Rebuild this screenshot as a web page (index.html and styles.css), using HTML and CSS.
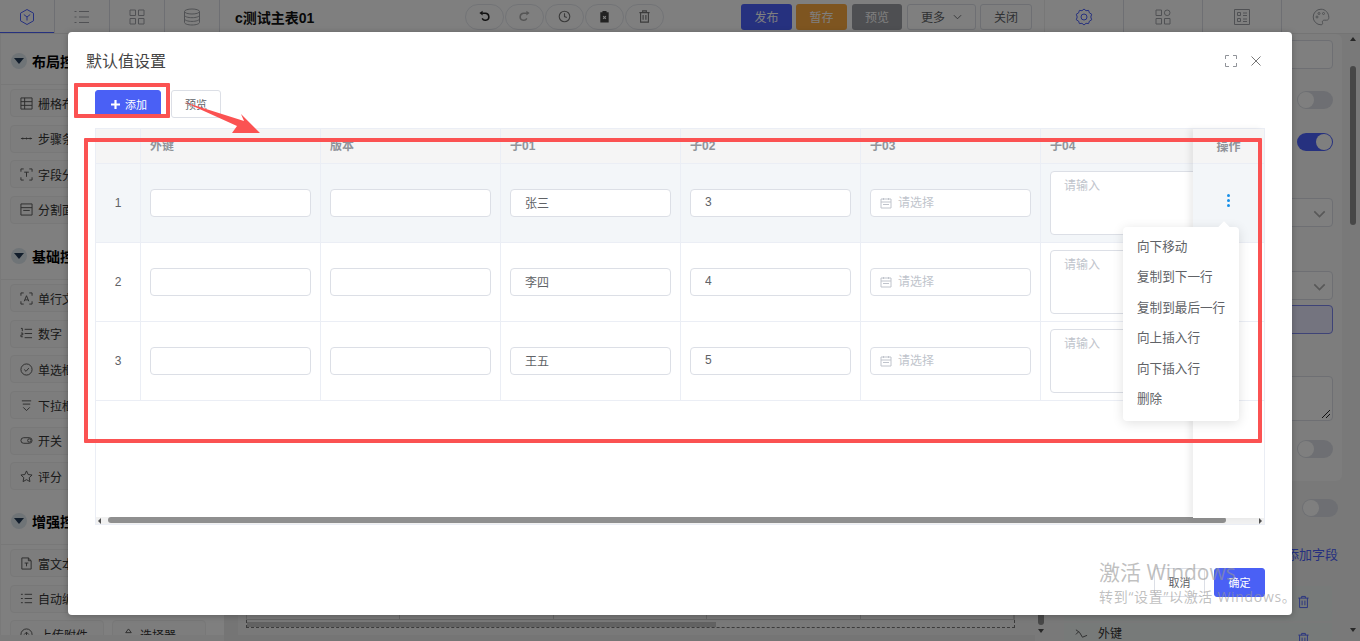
FILE: index.html
```html
<!DOCTYPE html>
<html lang="zh-CN">
<head>
<meta charset="utf-8">
<title>默认值设置</title>
<link rel="stylesheet" href="styles.css">
</head>
<body>
<div class="app">
  <header class="topbar">
    <div class="tabs tabs-left">
      <div class="tab tab-active"><svg class="ico-tab" viewBox="0 0 18 18"><path d="M9 1.500l6.500 3.700v7.600L9 16.500l-6.500-3.700V5.200z"/><path d="M5.800 6.500L9 9l3.200-2.500M9 9v3.500"/></svg></div>
      <div class="tab"><svg class="ico-tab" viewBox="0 0 18 18"><path d="M6 3.500h10M6 9h10M6 14.500h10M1.500 3.500h2M1.500 9h2M1.500 14.500h2"/></svg></div>
      <div class="tab"><svg class="ico-tab" viewBox="0 0 18 18"><path d="M2 2h5.500v5.500H2zM10.500 2H16v5.500h-5.500zM2 10.500h5.500V16H2zM10.500 10.500H16V16h-5.500z"/></svg></div>
      <div class="tab"><svg class="ico-tab" viewBox="0 0 18 18"><ellipse cx="9" cy="3.500" rx="7.500" ry="2.500"/><path d="M1.500 3.500v11c0 1.400 3.400 2.500 7.500 2.500s7.500-1.100 7.500-2.500v-11M1.500 7.200c0 1.400 3.400 2.500 7.500 2.500s7.500-1.100 7.500-2.500M1.500 10.900c0 1.400 3.400 2.500 7.500 2.500s7.500-1.100 7.500-2.500"/></svg></div>
    </div>
    <div class="form-title">c测试主表01</div>
    <div class="history">
      <button class="pill"><svg class="ico-pill ico-dark" viewBox="0 0 14 14"><path d="M4.500 3.500H8a3.800 3.800 0 1 1-3.500 5.500"/><path class="fill" d="M5 .8v5L1.500 3.300z"/></svg></button>
      <button class="pill"><svg class="ico-pill ico-dim" viewBox="0 0 14 14"><path d="M9.500 3.500H6a3.800 3.800 0 1 0 3.500 5.500"/><path class="fill" d="M9 .8v5l3.500-2.500z"/></svg></button>
      <button class="pill"><svg class="ico-pill" viewBox="0 0 14 14"><circle cx="7" cy="7" r="5.700"/><path d="M7 3.500V7l2.500 1"/></svg></button>
      <button class="pill"><svg class="ico-pill" viewBox="0 0 14 14"><path class="fill" d="M2.500 2.500h2.300V1h4.400v1.500h2.300v11h-9z"/><path class="cut" d="M5.500 6.500l3 3M8.500 6.500l-3 3"/></svg></button>
      <button class="pill"><svg class="ico-pill" viewBox="0 0 14 14"><path d="M1.500 2.800h11M5 2.800V1h4v1.800M2.800 2.800v10.200h8.400V2.800M5.500 5.500v5M8.500 5.500v5"/></svg></button>
    </div>
    <div class="actions">
      <button class="btn btn-blue">发布</button>
      <button class="btn btn-orange">暂存</button>
      <button class="btn btn-gray">预览</button>
      <button class="btn btn-more">更多<svg class="chev" viewBox="0 0 10 6"><path d="M1 1l4 4 4-4"/></svg></button>
      <button class="btn btn-close">关闭</button>
    </div>
    <div class="tabs tabs-right">
      <div class="tab-r tab-r-active"><svg class="ico-tab" viewBox="0 0 18 18"><path d="M9 1l2 1.700 2.600-.3.800 2.500 2.300 1.300L15.800 9l.9 2.800-2.300 1.300-.8 2.500-2.600-.3L9 17l-2-1.700-2.600.3-.8-2.500-2.300-1.300L2.200 9l-.9-2.800 2.300-1.300.8-2.500 2.600.3z"/><circle cx="9" cy="9" r="3"/></svg></div>
      <div class="tab-r"><svg class="ico-tab" viewBox="0 0 18 18"><path d="M2 2h5.500v5.500H2zM2 10.500h5.500V16H2zM10.500 10.500H16V16h-5.500z"/><circle cx="13.200" cy="4.800" r="2.800"/></svg></div>
      <div class="tab-r"><svg class="ico-tab" viewBox="0 0 18 18"><path d="M1.500 1.500h15v15h-15zM4.500 4.500h3v3h-3zM4.500 10.500h3v3h-3zM10 5h4M10 7.500h4M10 11h4M10 13.500h4"/></svg></div>
      <div class="tab-r"><svg class="ico-tab" viewBox="0 0 18 18"><path d="M9 1.200a7.800 7.800 0 1 0 0 15.600c1.500 0 1.900-1 1.500-2.100-.5-1.300.2-2.500 1.700-2.500h2.300c1.600 0 2.300-1.100 2.300-2.700C16.800 4.700 13.300 1.200 9 1.200z"/><circle cx="5" cy="9" r="1"/><circle cx="7" cy="5.500" r="1"/><circle cx="11.500" cy="5.500" r="1"/></svg></div>
    </div>
  </header>

  <div class="main">
    <aside class="sidebar">
      <section class="group">
        <h3 class="group-title"><span class="caret"></span>布局控件</h3>
        <div class="group-items">
          <div class="item"><svg class="ico-item" viewBox="0 0 14 14"><path d="M1 1h12v12H1zM1 5h12M1 9h12M5 1v12"/></svg>栅格布局</div>
          <div class="item"><svg class="ico-item" viewBox="0 0 14 14"><path d="M1 7h12M3 6v2M7 6v2M11 6v2"/></svg>步骤条</div>
          <div class="item"><svg class="ico-item" viewBox="0 0 14 14"><path d="M1 4V1h3M10 1h3v3M13 10v3h-3M4 13H1v-3M4.500 4.500h5M7 4.500v5"/></svg>字段分组</div>
          <div class="item"><svg class="ico-item" viewBox="0 0 14 14"><path d="M1 1h12v12H1zM1 5h12M3.500 8h7"/></svg>分割面板</div>
        </div>
      </section>
      <section class="group group-basic">
        <h3 class="group-title"><span class="caret"></span>基础控件</h3>
        <div class="group-items">
          <div class="item"><svg class="ico-item" viewBox="0 0 14 14"><path d="M1 4V1h3M10 1h3v3M13 10v3h-3M4 13H1v-3M4.500 10L7 4l2.500 6M5.500 8.500h3"/></svg>单行文本</div>
          <div class="item"><svg class="ico-item" viewBox="0 0 14 14"><path d="M5 2.500h8M5 7h8M5 11.500h8M1 1.500h1.500v3M1 6.500h2v2H1v2h2"/></svg>数字</div>
          <div class="item"><svg class="ico-item" viewBox="0 0 14 14"><circle cx="7" cy="7" r="6"/><path d="M4.500 7l2 2 3-3.500"/></svg>单选框</div>
          <div class="item"><svg class="ico-item" viewBox="0 0 14 14"><path d="M2 2h10M3 5.500h8M3.500 9L7 12.500 10.500 9"/></svg>下拉框</div>
          <div class="item"><svg class="ico-item" viewBox="0 0 14 14"><rect x="1" y="4" width="12" height="6" rx="3"/><circle cx="10" cy="7" r="1.800"/></svg>开关</div>
          <div class="item"><svg class="ico-item" viewBox="0 0 14 14"><path d="M7 1l1.800 3.900 4.200.5-3.100 2.900.8 4.200L7 10.400l-3.700 2.100.8-4.200L1 5.400l4.200-.5z"/></svg>评分</div>
        </div>
      </section>
      <section class="group group-adv">
        <h3 class="group-title"><span class="caret"></span>增强控件</h3>
        <div class="group-items">
          <div class="item"><svg class="ico-item" viewBox="0 0 14 14"><path d="M2 1h7l3 3v9H2zM9 1v3h3M5 6.500h4M7 6.500V10"/></svg>富文本</div>
          <div class="item"><svg class="ico-item" viewBox="0 0 14 14"><path d="M5 2.500h8M5 7h8M5 11.500h8M1 2.500h2M1 7h2M1 11.500h2"/></svg>自动编号</div>
          <div class="item item-upload"><svg class="ico-item" viewBox="0 0 14 14"><circle cx="7" cy="7" r="6"/><path d="M7 10V4.500M4.500 7L7 4.500 9.500 7"/></svg>上传附件</div>
          <div class="item item-second"><svg class="ico-item" viewBox="0 0 14 14"><path d="M7 1l3 4H4zM1 13l3-5 3 5zM7 13l3-5 3 5z"/></svg>选择器</div>
        </div>
      </section>
    </aside>

    <div class="center">
      <div class="canvas-wrap">
        <div class="canvas">
          <div class="canvas-cells"><span></span><span></span><span></span><span></span><span></span></div>
          <div class="canvas-track"><div class="canvas-thumb"></div></div>
        </div>
      </div>
      <div class="vscroll vscroll-center"><span class="arrow-up"></span><div class="vthumb"></div><span class="arrow-down"></span></div>
    </div>

    <aside class="panel">
      <div class="panel-body">
        <div class="card">
          <div class="box box-input"></div>
          <div class="switch-row sw-a"><span class="switch"></span></div>
          <div class="switch-row sw-b"><span class="switch switch-on"></span></div>
          <div class="box box-select sel-a"><svg class="chev-big" viewBox="0 0 10 6"><path d="M1 1l4 4 4-4"/></svg></div>
          <div class="box box-select sel-b"><svg class="chev-big" viewBox="0 0 10 6"><path d="M1 1l4 4 4-4"/></svg></div>
          <div class="box box-blue"></div>
          <div class="box box-area"><svg class="grip" viewBox="0 0 8 8"><path d="M0 8l8-8M4 8l4-4"/></svg></div>
          <div class="switch-row sw-c"><span class="switch"></span></div>
        </div>
        <div class="switch-row sw-d"><span class="switch"></span></div>
        <div class="add-field">添加字段</div>
        <div class="field-row"><svg class="ico-trash" viewBox="0 0 14 14"><path d="M1.500 2.800h11M5 2.800V1h4v1.800M2.800 2.800v10.200h8.400V2.800M5.500 5.500v5M8.500 5.500v5"/></svg></div>
        <div class="field-row field-row-b"><svg class="ico-link" viewBox="0 0 14 14"><path d="M1 3l4 3 3 5 5-2M1 8l3-3"/></svg><span class="field-name">外键</span><svg class="ico-trash" viewBox="0 0 14 14"><path d="M1.500 2.800h11M5 2.800V1h4v1.800M2.800 2.800v10.200h8.400V2.800M5.500 5.500v5M8.500 5.500v5"/></svg></div>
      </div>
      <div class="vscroll vscroll-right"><span class="arrow-up"></span><div class="vthumb"></div><span class="arrow-down"></span></div>
    </aside>
  </div>
</div>

<div class="overlay"></div>

<div class="dialog">
  <div class="dialog-head">
    <h2 class="dialog-title">默认值设置</h2>
    <div class="dialog-tools">
      <svg class="ico-full" viewBox="0 0 12 12"><path d="M0.500 4V0.500H4M8 0.500h3.500V4M11.500 8v3.500H8M4 11.500H0.500V8"/></svg>
      <svg class="ico-x" viewBox="0 0 10 10"><path d="M.5.5l9 9M9.500.5l-9 9"/></svg>
    </div>
  </div>
  <div class="dialog-toolbar">
    <button class="dbtn dbtn-primary dbtn-add"><svg class="ico-plus" viewBox="0 0 10 10"><path d="M5 0v10M0 5h10"/></svg>添加</button>
    <button class="dbtn dbtn-plain">预览</button>
  </div>
  <div class="table">
    <div class="table-scroll">
      <div class="tr tr-head">
        <div class="td"></div><div class="td">外键</div><div class="td">版本</div><div class="td">子01</div><div class="td">子02</div><div class="td">子03</div><div class="td">子04</div>
      </div>
      <div class="tr tr-current">
        <div class="td td-idx">1</div>
        <div class="td"><input class="field"></div>
        <div class="td"><input class="field"></div>
        <div class="td"><input class="field" value="张三"></div>
        <div class="td"><input class="field" value="3"></div>
        <div class="td"><div class="date"><svg class="ico-date" viewBox="0 0 12 12"><path d="M1 2h10v9H1zM1 5h10M3.500 1v2M8.500 1v2M3 7.500h6"/></svg><input class="date-input" placeholder="请选择"></div></div>
        <div class="td"><textarea class="area" placeholder="请输入"></textarea></div>
      </div>
      <div class="tr">
        <div class="td td-idx">2</div>
        <div class="td"><input class="field"></div>
        <div class="td"><input class="field"></div>
        <div class="td"><input class="field" value="李四"></div>
        <div class="td"><input class="field" value="4"></div>
        <div class="td"><div class="date"><svg class="ico-date" viewBox="0 0 12 12"><path d="M1 2h10v9H1zM1 5h10M3.500 1v2M8.500 1v2M3 7.500h6"/></svg><input class="date-input" placeholder="请选择"></div></div>
        <div class="td"><textarea class="area" placeholder="请输入"></textarea></div>
      </div>
      <div class="tr">
        <div class="td td-idx">3</div>
        <div class="td"><input class="field"></div>
        <div class="td"><input class="field"></div>
        <div class="td"><input class="field" value="王五"></div>
        <div class="td"><input class="field" value="5"></div>
        <div class="td"><div class="date"><svg class="ico-date" viewBox="0 0 12 12"><path d="M1 2h10v9H1zM1 5h10M3.500 1v2M8.500 1v2M3 7.500h6"/></svg><input class="date-input" placeholder="请选择"></div></div>
        <div class="td"><textarea class="area" placeholder="请输入"></textarea></div>
      </div>
    </div>
    <div class="hscroll"><span class="arrow-left"></span><div class="hthumb"></div><span class="arrow-right"></span></div>
    <div class="fixed-col">
      <div class="fc-head">操作</div>
      <div class="fc-cell fc-current"><span class="dots"><i></i><i></i><i></i></span></div>
      <div class="fc-cell"></div>
      <div class="fc-cell"></div>
    </div>
  </div>
  <div class="dialog-foot">
    <button class="dbtn dbtn-plain dbtn-foot">取消</button>
    <button class="dbtn dbtn-primary dbtn-foot">确定</button>
  </div>
  <div class="menu">
    <div class="menu-item">向下移动</div>
    <div class="menu-item">复制到下一行</div>
    <div class="menu-item">复制到最后一行</div>
    <div class="menu-item">向上插入行</div>
    <div class="menu-item">向下插入行</div>
    <div class="menu-item">删除</div>
  </div>
</div>

<div class="mark mark-add"></div>
<div class="mark mark-table"></div>
<svg class="mark-arrow" viewBox="0 0 90 40"><polygon points="0,0 60,19 57,12 76,31 48,31 53,24"/></svg>

<div class="watermark">
  <div class="wm-title">激活 Windows</div>
  <div class="wm-sub">转到“设置”以激活 Windows。</div>
</div>
</body>
</html>
```

FILE: styles.css
```css
* { box-sizing: border-box; }
html, body { margin: 0; padding: 0; height: 641px; overflow: hidden; }
body {
  position: relative;
  font-family: "Liberation Sans", "Noto Sans CJK SC", sans-serif;
  font-size: 12px;
  color: #303133;
  background: #fff;
}
button { font: inherit; cursor: pointer; padding: 0; }
h2, h3 { margin: 0; font-weight: normal; }

/* ---------- page behind the dialog ---------- */
.app { display: flex; flex-direction: column; height: 641px; }
.topbar {
  display: flex;
  align-items: center;
  height: 34px;
  flex: none;
  background: #fff;
  border-bottom: 1px solid #e8e8e8;
}
.tabs { display: flex; height: 33px; }
.tab {
  width: 55px;
  display: flex; align-items: center; justify-content: center;
  border-right: 1px solid #dcdfe6;
  color: #a0a3a8;
}
.tab-active { color: #4d62ff; box-shadow: inset 0 -1px 0 #4d62ff; }
.ico-tab { width: 18px; height: 18px; fill: none; stroke: currentColor; stroke-width: 1; }
.form-title { margin-left: 15px; width: 230px; font-size: 14px; font-weight: bold; color: #111; }
.history { display: flex; gap: 1px; }
.pill {
  width: 39px; height: 26px;
  border: 1px solid #e4e7ed; border-radius: 13px;
  background: #fff;
  display: flex; align-items: center; justify-content: center;
}
.ico-pill { width: 13px; height: 13px; fill: none; stroke: #777; stroke-width: 1.200; }
.ico-pill .fill { fill: #444; stroke: none; }
.ico-pill .cut { stroke: #fff; }
.ico-dark { stroke: #222; stroke-width: 1.600; }
.ico-dark .fill { fill: #222; }
.ico-dim { stroke: #aaa; stroke-width: 1.600; }
.ico-dim .fill { fill: #aaa; }
.actions { display: flex; gap: 4px; margin-left: 77px; }
.btn { height: 26px; width: 51px; border: 1px solid transparent; border-radius: 3px; color: #fff; }
.btn-blue { background: #4d62ff; }
.btn-orange { background: #fcaa40; width: 51px; margin-right: 1px; }
.btn-gray { background: #9c9ea4; width: 50px; margin-right: 1px; }
.btn-more, .btn-close { background: #fff; border-color: #dcdfe6; color: #606266; }
.btn-more { width: 69px; display: flex; align-items: center; justify-content: center; gap: 8px; }
.btn-close { width: 52px; }
.chev { width: 9px; height: 6px; fill: none; stroke: #606266; }
.tabs-right { margin-left: 12px; flex: 1; }
.tab-r {
  flex: 1;
  display: flex; align-items: center; justify-content: center;
  border-right: 1px solid #dcdfe6;
  color: #a0a3a8;
}
.tab-r:first-child { border-left: 1px solid #eee; }
.tab-r:last-child { border-right: 0; }
.tab-r-active { color: #4d62ff; }

.main { display: flex; flex: 1; min-height: 0; background: #f4f4f4; }

.sidebar { width: 224px; flex: none; margin-bottom: 6px; padding-top: 14px; background: #fff; border-left: 1px solid #f2f2f2; overflow: hidden; }
.group-title {
  display: flex; align-items: center; gap: 5px;
  height: 26px; padding-left: 10px;
  font-size: 14px; font-weight: bold; color: #000;
  white-space: nowrap;
}
.caret {
  width: 16px; height: 16px; border-radius: 50%;
  background: #dfe8ee;
  position: relative;
  flex: none;
}
.caret::after {
  content: ""; position: absolute; left: 3px; top: 5px;
  border-left: 5px solid transparent; border-right: 5px solid transparent;
  border-top: 6px solid #233a57;
}
.group-items {
  display: grid;
  grid-template-columns: 94px 94px;
  column-gap: 8px; row-gap: 7.600px;
  margin-top: 10px; padding: 4px 0 0 9px;
  border-top: 1px solid #f0f0f0;
}
.item {
  grid-column: 1;
  height: 28px;
  display: flex; align-items: center; gap: 5px;
  padding-left: 9px;
  background: #fafafa;
  border: 1px solid #f0f0f0;
  border-radius: 4px;
  color: #333;
  white-space: nowrap;
}
.item-upload { gap: 7px; }
.item-second { grid-column: 2; grid-row: 3; }
.ico-item { width: 13px; height: 13px; flex: none; fill: none; stroke: #555; stroke-width: 1; }
.group-basic { margin-top: 19.500px; }
.group-adv { margin-top: 18px; }

.center { flex: 1; display: flex; background: #ebebeb; min-width: 0; }
.canvas-wrap { flex: 1; display: flex; flex-direction: column; justify-content: flex-end; padding: 0 20px 7px 8px; background: #f2f2f2; margin: 0 0 6px 14px; }
.canvas { height: 16px; }
.canvas-cells { display: flex; height: 8px; border: 1px solid #ccc; border-top: 0; }
.canvas-cells span { flex: 1; border-right: 1px solid #ccc; }
.canvas-track { height: 8px; padding-top: 2px; border-bottom: 1px dashed #777; border-left: 1px dashed #777; border-right: 1px dashed #777; }
.canvas-thumb { width: 469px; height: 5px; background: #c4c4c4; }

.vscroll { width: 11px; flex: none; display: flex; flex-direction: column; align-items: center; position: relative; background: #f2f2f2; }
.vscroll-center .vthumb { margin-top: auto; height: 30px; }
.vscroll-center .arrow-up { visibility: hidden; }
.vscroll-right { margin: 0 2px 0 0; padding-top: 3px; }
.vthumb { width: 6px; background: #8f8f8f; border-radius: 3px; flex: none; }
.vscroll-right .vthumb { height: 159px; margin-top: 25px; }
.arrow-up { width: 0; height: 0; border-left: 3.500px solid transparent; border-right: 3.500px solid transparent; border-bottom: 4px solid #505050; flex: none; }
.arrow-down { width: 0; height: 0; border-left: 3.500px solid transparent; border-right: 3.500px solid transparent; border-top: 4px solid #505050; flex: none; margin-top: auto; margin-bottom: 9px; }
.vscroll-center .arrow-down { margin-top: 4px; margin-bottom: 8px; }

.panel { width: 314px; flex: none; display: flex; background: #f2f2f2; }
.panel-body { flex: 1; padding: 0 9px 0 4px; min-width: 0; }
.card { width: 292px; height: 447px; background: #fafafa; border-radius: 6px; padding: 6px 9px 0 0; }
.box { border: 1px solid #dcdfe6; border-radius: 4px; background: #fff; margin-left: 8px; position: relative; }
.box-input { height: 29px; }
.box-select { height: 29px; }
.sel-a { margin-top: 47px; }
.sel-b { margin-top: 44px; }
.box-blue { height: 29px; margin-top: 5px; background: #e8e9ff; border-color: #7d86ee; }
.box-area { height: 45px; margin-top: 42px; }
.chev-big { position: absolute; right: 6px; top: 11px; width: 13px; height: 8px; fill: none; stroke: #b0b0b0; stroke-width: 1.300; }
.grip { position: absolute; right: 2px; bottom: 2px; width: 8px; height: 8px; stroke: #222; fill: none; stroke-width: 1; }
.switch-row { display: flex; justify-content: flex-end; height: 18px; }
.sw-a { margin-top: 22px; }
.sw-b { margin-top: 24px; }
.sw-c { margin-top: 19px; }
.sw-d { margin-top: 18px; }
.switch { width: 36px; height: 18px; border-radius: 9px; background: #dcdfe6; position: relative; display: block; }
.switch::after { content: ""; position: absolute; left: 1px; top: 1px; width: 16px; height: 16px; border-radius: 50%; background: #fff; }
.switch-on { background: #4d62ff; }
.switch-on::after { left: 19px; }
.add-field { text-align: right; margin-top: 28px; height: 20px; font-size: 13px; line-height: 20px; color: #4d62ff; white-space: nowrap; }
.field-row { height: 35px; margin: 21px 6px 0 14px; background: #eef4f3; position: relative; }
.field-row-b { margin-top: 2px; height: 18px; display: flex; align-items: flex-start; padding: 4px 0 0 11px; gap: 10px; color: #333; }
.field-name { font-size: 12px; line-height: 14px; }
.ico-link { width: 13px; height: 13px; fill: none; stroke: #555; }
.ico-trash { position: absolute; right: 22px; top: 9px; width: 13px; height: 14px; fill: none; stroke: #4d62ff; }

/* ---------- overlay and dialog ---------- */
.overlay { position: absolute; inset: 0; background: rgba(0, 0, 0, .5); }
.dialog {
  position: absolute; left: 68px; top: 32px;
  width: 1224px; height: 583px;
  display: flex; flex-direction: column;
  padding: 0 27px;
  background: #fff;
  border-radius: 4px;
  box-shadow: 0 1px 6px rgba(0, 0, 0, .25);
}
.dialog-head { height: 56px; flex: none; margin: 0 4px 2px -9px; display: flex; align-items: center; justify-content: space-between; }
.dialog-title { font-size: 16px; color: #444; }
.dialog-tools { display: flex; align-items: center; gap: 14px; padding-top: 2px; }
.ico-full { width: 12px; height: 12px; fill: none; stroke: #909399; }
.ico-x { width: 10px; height: 10px; fill: none; stroke: #777; }
.dialog-toolbar { display: flex; gap: 10px; flex: none; height: 28px; }
.dbtn { height: 28px; border-radius: 3px; border: 1px solid #dcdfe6; font-size: 11px; display: flex; align-items: center; justify-content: center; }
.dbtn-primary { background: #4a60f5; border-color: #4a60f5; color: #fff; }
.dbtn-plain { background: #fff; color: #606266; }
.dbtn-add { width: 66px; gap: 5px; padding-left: 2px; }
.dialog-toolbar .dbtn-plain { width: 50px; }
.ico-plus { width: 9px; height: 9px; stroke: #fff; stroke-width: 2.400; fill: none; }

.table {
  position: relative;
  flex: none;
  height: 397px;
  margin-top: 10px;
  border: 1px solid #ebeef5;
  display: flex; flex-direction: column;
}
.table-scroll { flex: 1; overflow: hidden; }
.tr { display: grid; grid-template-columns: 45px repeat(6, 180px); width: 1168px; height: 79px; border-bottom: 1px solid #ebeef5; }
.tr-head { height: 35px; background: #f5f5f5; color: #909399; font-weight: bold; }
.tr-head .td { padding-bottom: 3px; }
.tr-current { background: #f3f6f9; }
.td { display: flex; align-items: center; padding: 0 9px; border-right: 1px solid #ebeef5; min-width: 0; }
.td-idx { justify-content: center; padding: 0; color: #606266; }
.field, .date, .area {
  width: 100%;
  border: 1px solid #dcdfe6;
  border-radius: 4px;
  background: #fff;
  font: inherit;
  color: #606266;
  outline: none;
}
.field { height: 28px; padding: 0 14px 2px 14px; }
.date { height: 28px; display: flex; align-items: center; gap: 6px; padding-left: 9px; }
.date-input { border: 0; padding: 0; width: 100px; font: inherit; outline: none; background: transparent; }
.ico-date { width: 12px; height: 12px; flex: none; fill: none; stroke: #c0c4cc; }
.area { height: 64px; padding: 4px 13px; resize: none; display: block; }
::placeholder { color: #c0c4cc; opacity: 1; }

.hscroll { height: 7px; flex: none; display: flex; align-items: center; background: #f1f1f1; padding-left: 2px; position: relative; }
.hthumb { position: absolute; left: 12px; top: 0; width: 1118px; height: 6px; border-radius: 3px; background: #8f8f8f; }
.arrow-left { width: 0; height: 0; border-top: 3px solid transparent; border-bottom: 3px solid transparent; border-right: 3px solid #505050; }
.arrow-right { width: 0; height: 0; border-top: 3px solid transparent; border-bottom: 3px solid transparent; border-left: 3px solid #505050; position: absolute; right: 2px; }

.fixed-col {
  position: absolute; right: 0; top: 0; bottom: 6px;
  width: 71px;
  background: #fff;
  box-shadow: -4px 0 6px rgba(0, 0, 0, .07);
}
.fc-head { height: 35px; display: flex; align-items: center; justify-content: center; padding-bottom: 2px; background: #f5f5f5; border-bottom: 1px solid #ebeef5; color: #909399; font-weight: bold; }
.fc-cell { height: 79px; display: flex; align-items: center; justify-content: center; border-bottom: 1px solid #ebeef5; padding-bottom: 5px; }
.fc-current { background: #f3f6f9; }
.dots { display: flex; flex-direction: column; gap: 2px; }
.dots i { display: block; width: 3px; height: 3px; border-radius: 50%; background: #1890e8; }

.dialog-foot { display: flex; justify-content: flex-end; gap: 9px; margin-top: 43px; flex: none; }
.dbtn-foot { width: 51px; height: 29px; padding-bottom: 2px; }

.menu {
  position: absolute; left: 1055px; top: 195px;
  width: 116px; height: 194px;
  padding: 4.500px 0 0 14px;
  background: #fff;
  border-radius: 4px;
  box-shadow: 0 2px 12px rgba(0, 0, 0, .12);
}
.menu::before {
  content: ""; position: absolute; left: 97px; top: -4px;
  width: 8px; height: 8px; background: #fff; transform: rotate(45deg);
}
.menu-item { height: 30.600px; line-height: 30.600px; font-size: 12.600px; color: #606266; white-space: nowrap; position: relative; }

/* ---------- hand-drawn annotations ---------- */
.mark { position: absolute; border: 4px solid #fb5252; border-radius: 1px; pointer-events: none; }
.mark-add { left: 74px; top: 83px; width: 96px; height: 35px; }
.mark-table { left: 84px; top: 138px; width: 1178px; height: 305px; }
.mark-arrow { position: absolute; left: 184px; top: 102px; width: 90px; height: 40px; fill: #fb5252; }

.watermark { position: absolute; left: 1099px; top: 560px; color: rgba(150, 150, 150, .6); pointer-events: none; white-space: nowrap; font-family: "Open Sans", "Noto Sans CJK SC", sans-serif; }
.wm-title { font-size: 21px; line-height: 25px; }
.wm-sub { font-size: 14px; line-height: 20px; margin-top: 2px; letter-spacing: .7px; }
```
